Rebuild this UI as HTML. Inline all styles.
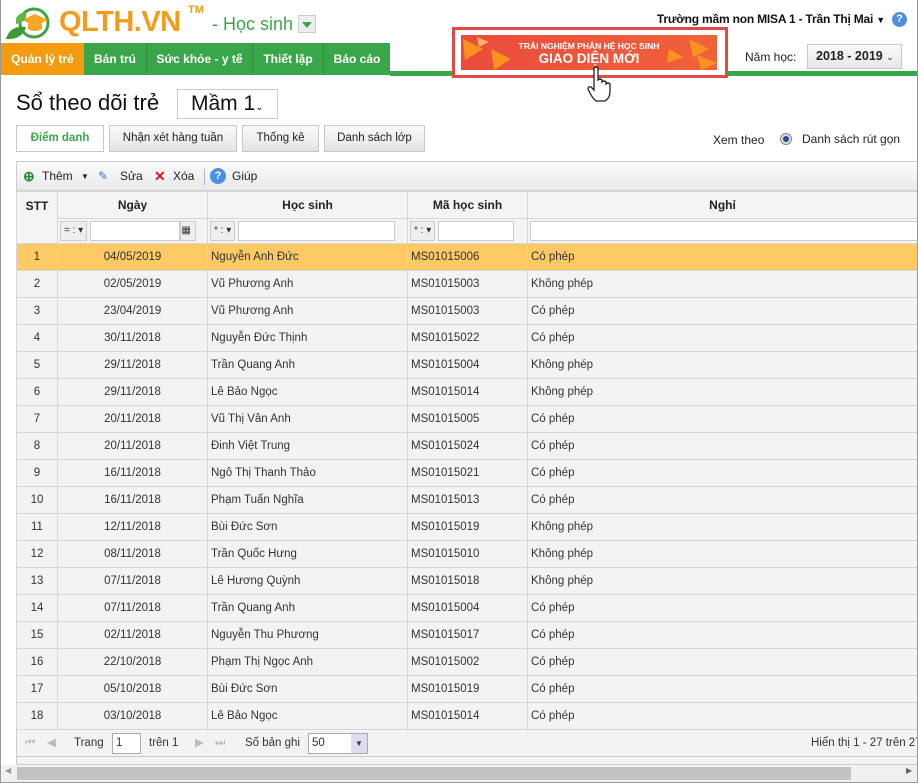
<!DOCTYPE html>
<html><head><meta charset="utf-8"><style>
*{box-sizing:border-box;margin:0;padding:0}
body{width:918px;height:783px;overflow:hidden;background:#fff;font-family:"Liberation Sans",sans-serif;font-size:12px;color:#222;position:relative}
.abs{position:absolute}
.tab{position:absolute;top:43px;height:32px;background:#3aa64a;color:#fff;font-weight:bold;font-size:12px;line-height:32px;text-align:center;border-right:1px solid #2e8d3c}
.btn{position:absolute;top:125px;height:27px;border:1px solid #c8c8c8;background:linear-gradient(#fafafa,#e4e4e4);font-size:11.5px;line-height:25px;text-align:center;color:#222}
table{border-collapse:collapse;position:absolute;left:16px;top:191px;width:902px;table-layout:fixed}
td{height:27px;border:1px solid #d6d6d6;font-size:11.5px;padding:0 3px;white-space:nowrap;color:#333;overflow:hidden}
th{border:1px solid #d6d6d6;background:#f4f4f4;font-size:12px;height:27px;font-weight:bold;color:#222}
.f{height:25px;background:#f4f4f4;border:1px solid #d6d6d6;padding:2px 2px}
.sel{display:inline-block;height:20px;border:1px solid #ccc;background:#eee;font-size:10px;line-height:18px;padding:0 3px;vertical-align:top;color:#333}
.inp{display:inline-block;height:20px;border:1px solid #ccc;background:#fff;vertical-align:top}
td.c{text-align:center}
td.s{background:#f3f3f3;text-align:center}
tr.hl td{background:#fdc965}
</style></head><body>
<div class="abs" style="left:0;top:0;width:1px;height:783px;background:#9a9a9a;z-index:5"></div>
<div class="abs" style="left:917px;top:0;width:1px;height:783px;background:#9a9a9a;z-index:5"></div>
<div class="abs" style="left:0;top:782px;width:918px;height:1px;background:#9a9a9a;z-index:5"></div>
<!-- logo -->
<svg class="abs" style="left:4px;top:6px" width="50" height="36" viewBox="0 0 50 36">
<circle cx="30" cy="17" r="14" fill="none" stroke="#43a33d" stroke-width="3"/>
<path d="M18 14 L31 8 L44 14 L31 20 Z" fill="#f5a623"/>
<path d="M24 17 v6 q7 4 14 0 v-6 l-7 3z" fill="#f5a623"/>
<path d="M2 33 q4 -14 20 -12 q-4 13 -20 12z" fill="#3d9a36"/>
<path d="M12 18 q-2 -10 10 -12 q2 10 -10 12z" fill="#5cb84a"/>
</svg>
<div class="abs" style="left:59px;top:6px;font-size:29px;font-weight:bold;color:#f39c1c;letter-spacing:-0.5px">QLTH.VN</div>
<div class="abs" style="left:188px;top:4px;font-size:11px;font-weight:bold;color:#f39c1c">TM</div>
<div class="abs" style="left:212px;top:14px;font-size:18px;color:#3aa64a">- Học sinh</div>
<div class="abs" style="left:298px;top:15px;width:18px;height:18px;border:1px solid #ccc;background:#eee"><div style="margin:6px 0 0 3px;width:0;height:0;border-left:5px solid transparent;border-right:5px solid transparent;border-top:6px solid #3aa64a"></div></div>
<!-- tabs -->
<div class="tab" style="left:1px;width:83px;background:#f39c12;border-right:none">Quản lý trẻ</div>
<div class="tab" style="left:84px;width:63px">Bán trú</div>
<div class="tab" style="left:147px;width:106px">Sức khỏe - y tế</div>
<div class="tab" style="left:253px;width:71px">Thiết lập</div>
<div class="tab" style="left:324px;width:66px;border-right:none">Báo cáo</div>
<div class="abs" style="left:390px;top:71px;width:527px;height:5px;background:#3aa64a"></div>
<!-- banner -->
<div class="abs" style="left:452px;top:27px;width:276px;height:51px;border:3px solid #e04a44;background:#fff"></div>
<div class="abs" style="left:461px;top:35px;width:256px;height:35px;background:linear-gradient(90deg,#ea4b3c,#f0623a);overflow:hidden;color:#fff;text-align:center;font-weight:bold">
<svg class="abs" style="left:0;top:0" width="256" height="35"><path d="M2 4 L22 14 L4 25Z" fill="#f7931e"/><path d="M30 14 L50 24 L33 35Z" fill="#f7931e"/><path d="M16 2 L28 7 L18 12Z" fill="#f9b36b"/><path d="M228 4 L248 14 L232 22Z" fill="#f7931e"/><path d="M236 20 L256 28 L240 35Z" fill="#f7931e"/><path d="M208 14 L222 22 L206 28Z" fill="#f7931e"/></svg>
<div style="position:relative;font-size:8.5px;margin-top:6px">TRẢI NGHIỆM PHÂN HỆ HỌC SINH</div>
<div style="position:relative;font-size:13.5px;margin-top:0px">GIAO DIỆN MỚI</div></div>
<svg class="abs" style="left:586px;top:66px" width="26" height="36" viewBox="0 0 26 36"><path d="M8 2 q2 -2 4 0 v12 q2 -2 4 0 v2 q2 -2 4 0 v2 q2 -2 4 0 v8 q0 6 -5 9 h-9 q-4 -3 -8 -12 q0 -3 3 -2 l3 3 v-22z" fill="#fff" stroke="#222" stroke-width="1.3"/></svg>
<!-- top right -->
<div class="abs" style="right:33px;top:12px;font-size:12px;font-weight:bold;color:#111;white-space:nowrap;letter-spacing:-0.2px">Trường mầm non MISA 1 - Trần Thị Mai <span style="font-size:9px">▼</span></div>
<div class="abs" style="left:892px;top:12px;width:15px;height:15px;border-radius:50%;background:#4a90e2;color:#fff;font-size:11px;font-weight:bold;text-align:center;line-height:15px">?</div>
<div class="abs" style="left:745px;top:50px;font-size:12px;color:#222">Năm học:</div>
<div class="abs" style="left:807px;top:44px;width:95px;height:25px;border:1px solid #c8c8c8;background:linear-gradient(#fafafa,#e6e6e6);font-weight:bold;font-size:12.5px;line-height:23px;padding-left:8px;white-space:nowrap">2018 - 2019 <span style="font-weight:normal;font-size:9px">⌄</span></div>
<!-- title -->
<div class="abs" style="left:16px;top:90px;font-size:22px;color:#111">Sổ theo dõi trẻ</div>
<div class="abs" style="left:177px;top:89px;width:101px;height:30px;border:1px solid #ccc;font-size:21px;line-height:28px;padding-left:13px;color:#111">Mầm 1<span style="font-size:10px">⌄</span></div>
<div class="btn" style="left:16px;width:88px;background:#fff;color:#3aa64a;font-weight:bold">Điểm danh</div>
<div class="btn" style="left:109px;width:128px">Nhận xét hàng tuần</div>
<div class="btn" style="left:242px;width:77px">Thống kê</div>
<div class="btn" style="left:324px;width:101px">Danh sách lớp</div>
<div class="abs" style="left:713px;top:133px;font-size:12px">Xem theo</div>
<div class="abs" style="left:780px;top:133px;width:12px;height:12px;border-radius:50%;border:1px solid #888;background:#ddd"><div style="margin:2px;width:6px;height:6px;border-radius:50%;background:#1f4e8a"></div></div>
<div class="abs" style="left:802px;top:132px;font-size:12px;white-space:nowrap">Danh sách rút gọn</div>
<!-- grid -->
<div class="abs" style="left:16px;top:161px;width:902px;height:604px;border:1px solid #ccc;border-right:none;background:#f3f3f3"></div>
<div class="abs" style="left:17px;top:162px;width:901px;height:29px;background:linear-gradient(#fbfbfb,#e9e9e9);border-bottom:1px solid #d0d0d0;font-size:12px;line-height:29px">
<span style="position:absolute;left:6px;color:#2a8a3a;font-weight:bold;font-size:14px">⊕</span><span style="position:absolute;left:25px">Thêm</span><span style="position:absolute;left:64px;font-size:8px">▼</span>
<span style="position:absolute;left:81px;color:#3b7dc4">✎</span><span style="position:absolute;left:103px">Sửa</span>
<span style="position:absolute;left:137px;color:#d01818;font-weight:bold;font-size:14px">✕</span><span style="position:absolute;left:156px">Xóa</span>
<span style="position:absolute;left:187px;top:7px;width:1px;height:16px;background:#9bc"></span>
<span style="position:absolute;left:193px;top:6px;width:16px;height:16px;border-radius:50%;background:#4a90e2;color:#fff;font-weight:bold;font-size:11px;line-height:16px;text-align:center">?</span><span style="position:absolute;left:215px">Giúp</span></div>
<table>
<colgroup><col style="width:41px"><col style="width:150px"><col style="width:200px"><col style="width:120px"><col></colgroup>
<tr><th rowspan="2" style="vertical-align:top;padding-top:7px">STT</th><th>Ngày</th><th>Học sinh</th><th>Mã học sinh</th><th>Nghỉ</th></tr>
<tr><td class="f"><span class="sel">= : ▾</span> <span class="inp" style="width:90px"></span><span class="sel" style="width:16px;padding:0">▦</span></td><td class="f"><span class="sel">* : ▾</span> <span class="inp" style="width:157px"></span></td><td class="f"><span class="sel">* : ▾</span> <span class="inp" style="width:76px"></span></td><td class="f"><span class="inp" style="width:390px"></span></td></tr>
<tr class="hl"><td class="s">1</td><td class="c">04/05/2019</td><td>Nguyễn Anh Đức</td><td>MS01015006</td><td>Có phép</td></tr>
<tr><td class="s">2</td><td class="c">02/05/2019</td><td>Vũ Phương Anh</td><td>MS01015003</td><td>Không phép</td></tr>
<tr><td class="s">3</td><td class="c">23/04/2019</td><td>Vũ Phương Anh</td><td>MS01015003</td><td>Có phép</td></tr>
<tr><td class="s">4</td><td class="c">30/11/2018</td><td>Nguyễn Đức Thịnh</td><td>MS01015022</td><td>Có phép</td></tr>
<tr><td class="s">5</td><td class="c">29/11/2018</td><td>Trần Quang Anh</td><td>MS01015004</td><td>Không phép</td></tr>
<tr><td class="s">6</td><td class="c">29/11/2018</td><td>Lê Bảo Ngọc</td><td>MS01015014</td><td>Không phép</td></tr>
<tr><td class="s">7</td><td class="c">20/11/2018</td><td>Vũ Thị Vân Anh</td><td>MS01015005</td><td>Có phép</td></tr>
<tr><td class="s">8</td><td class="c">20/11/2018</td><td>Đinh Việt Trung</td><td>MS01015024</td><td>Có phép</td></tr>
<tr><td class="s">9</td><td class="c">16/11/2018</td><td>Ngô Thị Thanh Thảo</td><td>MS01015021</td><td>Có phép</td></tr>
<tr><td class="s">10</td><td class="c">16/11/2018</td><td>Phạm Tuấn Nghĩa</td><td>MS01015013</td><td>Có phép</td></tr>
<tr><td class="s">11</td><td class="c">12/11/2018</td><td>Bùi Đức Sơn</td><td>MS01015019</td><td>Không phép</td></tr>
<tr><td class="s">12</td><td class="c">08/11/2018</td><td>Trần Quốc Hưng</td><td>MS01015010</td><td>Không phép</td></tr>
<tr><td class="s">13</td><td class="c">07/11/2018</td><td>Lê Hương Quỳnh</td><td>MS01015018</td><td>Không phép</td></tr>
<tr><td class="s">14</td><td class="c">07/11/2018</td><td>Trần Quang Anh</td><td>MS01015004</td><td>Có phép</td></tr>
<tr><td class="s">15</td><td class="c">02/11/2018</td><td>Nguyễn Thu Phương</td><td>MS01015017</td><td>Có phép</td></tr>
<tr><td class="s">16</td><td class="c">22/10/2018</td><td>Phạm Thị Ngọc Anh</td><td>MS01015002</td><td>Có phép</td></tr>
<tr><td class="s">17</td><td class="c">05/10/2018</td><td>Bùi Đức Sơn</td><td>MS01015019</td><td>Có phép</td></tr>
<tr><td class="s">18</td><td class="c">03/10/2018</td><td>Lê Bảo Ngọc</td><td>MS01015014</td><td>Có phép</td></tr>
</table>
<!-- pager -->
<div class="abs" style="left:17px;top:730px;width:901px;height:27px;background:#f3f3f3;border-bottom:1px solid #ccc;font-size:11.5px;line-height:27px;color:#333;overflow:hidden;white-space:nowrap">
<span style="position:absolute;left:8px;color:#bbb">⏮</span><span style="position:absolute;left:30px;color:#bbb">◀</span>
<span style="position:absolute;left:57px">Trang</span><span style="position:absolute;left:95px;top:3px;width:29px;height:21px;border:1px solid #aaa;background:#fff;line-height:19px;padding-left:3px">1</span>
<span style="position:absolute;left:132px">trên 1</span><span style="position:absolute;left:178px;color:#bbb">▶</span><span style="position:absolute;left:198px;color:#bbb">⏭</span>
<span style="position:absolute;left:228px">Số bản ghi</span><span style="position:absolute;left:291px;top:3px;width:60px;height:21px;border:1px solid #aaa;background:#fff;line-height:19px;padding-left:3px">50<span style="position:absolute;right:0;top:0;width:16px;height:19px;background:#dde;font-size:8px;text-align:center;color:#335">▼</span></span>
<span style="position:absolute;left:794px">Hiển thị 1 - 27 trên 27</span></div>
<!-- scrollbar -->
<div class="abs" style="left:1px;top:765px;width:916px;height:17px;background:#f0f0f0"></div>
<div class="abs" style="left:17px;top:767px;width:834px;height:13px;background:#c2c2c2"></div>
<div class="abs" style="left:5px;top:766px;font-size:8px;color:#999">◀</div>
<div class="abs" style="left:906px;top:766px;font-size:8px;color:#666">▶</div>
</body></html>
